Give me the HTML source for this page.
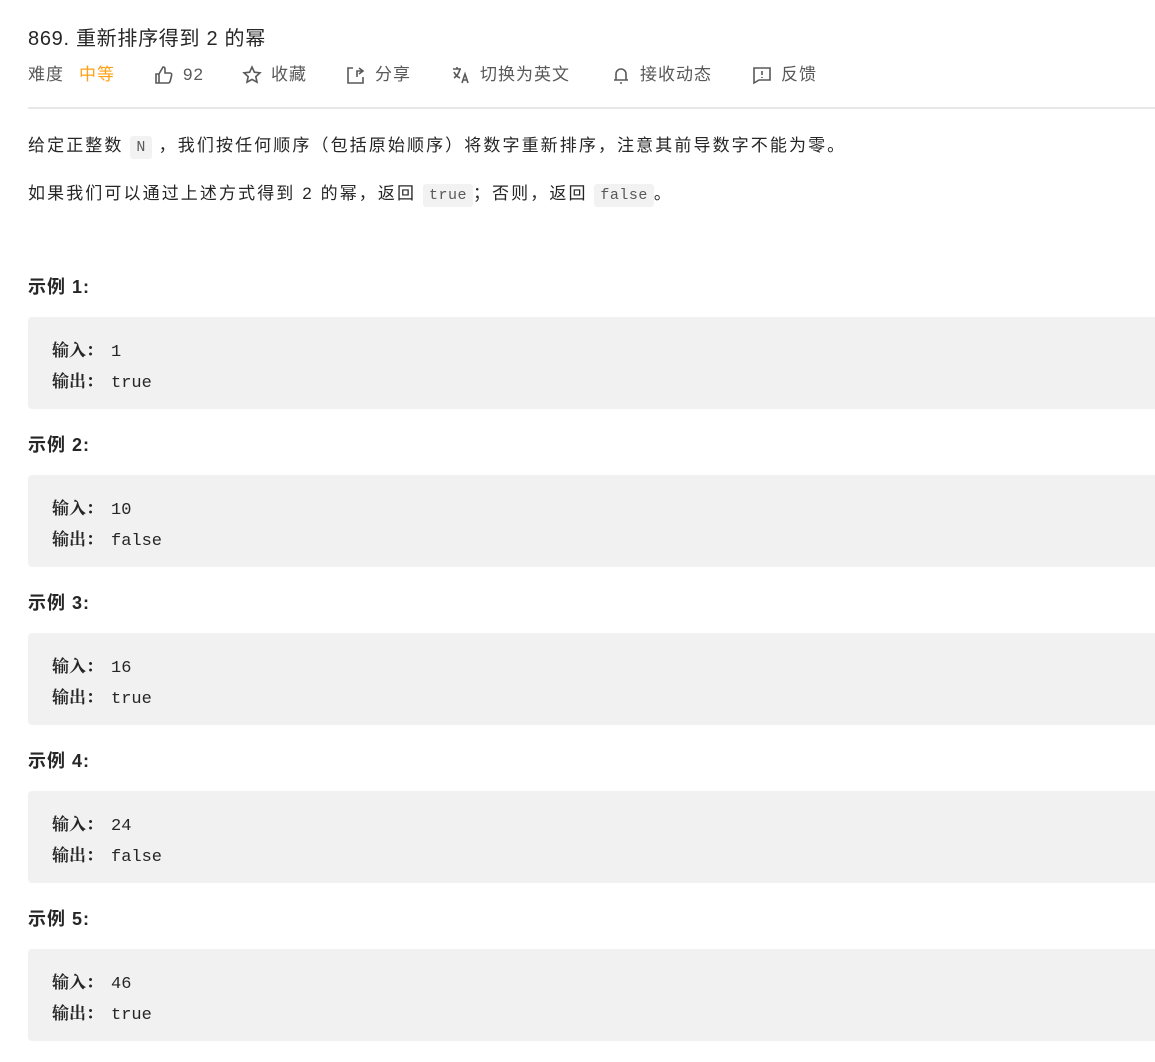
<!DOCTYPE html>
<html><head><meta charset="utf-8"><style>
body{margin:0;background:#fff;width:1155px;height:1062px;overflow:hidden;position:relative;font-family:"Liberation Sans","Noto Sans CJK SC",sans-serif;color:#262626}
.a{position:absolute;white-space:nowrap}
.title{left:28px;top:22px;font-size:20px;color:#262626;letter-spacing:0.7px}
.tb{top:63px;height:24px;line-height:24px;font-size:17px;letter-spacing:1px;color:#595959;display:flex;align-items:center}
.tb svg{margin-right:9px}
.sep{position:absolute;left:28px;top:107px;width:1127px;height:2px;background:#e8e8e8}
.p{left:28px;font-size:17px;letter-spacing:2.1px;color:#262626}
code{font-family:"Liberation Mono",monospace;font-size:15px;letter-spacing:0.5px;background:#f2f2f2;border-radius:3px;padding:3px 6px;color:#595959}
.h{left:28px;font-size:18px;letter-spacing:1px;font-weight:bold;color:#262626}
.pre{position:absolute;left:28px;width:1127px;height:92px;background:#f1f1f1;border-radius:4px 0 0 4px}
.pre div{position:absolute;left:24px;font-family:"Liberation Mono","Noto Sans CJK SC",monospace;font-size:17px;color:#262626;white-space:nowrap}
.pre b{font-family:"Noto Serif CJK SC","Liberation Serif",serif;font-weight:bold;display:inline-block;width:59px}
</style></head><body>
<div class="a title">869. 重新排序得到 2 的幂</div>
<div class="a tb" style="left:28px">难度 <span style="color:#ffa116;margin-left:15px">中等</span></div>
<div class="a tb" style="left:154px"><svg width="20" height="20" viewBox="0 0 20 20" fill="none" stroke="#595959" stroke-width="1.6"><path d="M2 9h3v9H2zM5 9l4-7c1.5 0 2 1 2 2v4h5c1 0 2 1 1.7 2l-1.5 6c-.3 1-1 2-2 2H5"/></svg>92</div>
<div class="a tb" style="left:242px"><svg width="20" height="20" viewBox="0 0 20 20" fill="none" stroke="#595959" stroke-width="1.6"><path d="M10 2l2.4 5.2 5.6.6-4.2 3.8 1.2 5.6L10 14.4 5 17.2l1.2-5.6L2 7.8l5.6-.6z"/></svg>收藏</div>
<div class="a tb" style="left:346px"><svg width="20" height="20" viewBox="0 0 20 20" fill="none" stroke="#595959" stroke-width="1.6"><path d="M7 3H2v15h15v-6M11 12V6h6M13 3l4 3-4 3"/></svg>分享</div>
<div class="a tb" style="left:451px"><svg width="20" height="20" viewBox="0 0 20 20" fill="none" stroke="#595959" stroke-width="1.6"><path d="M2 4h8M6 2v2M3 7c2 4 4 5 6 6M9 4c-1 4-3 7-6 9M11 18l3-9 3 9M12 15h4"/></svg>切换为英文</div>
<div class="a tb" style="left:611px"><svg width="20" height="20" viewBox="0 0 20 20" fill="none" stroke="#595959" stroke-width="1.6"><path d="M5 15V9a5 5 0 0110 0v6M3 15h14M9 18h2"/></svg>接收动态</div>
<div class="a tb" style="left:752px"><svg width="20" height="20" viewBox="0 0 20 20" fill="none" stroke="#595959" stroke-width="1.6"><path d="M2 3h16v12H7l-5 3zM10 6v4M10 12v1"/></svg>反馈</div>
<div class="sep"></div>
<div class="a p" style="top:131px">给定正整数 <code>N</code> ，我们按任何顺序（包括原始顺序）将数字重新排序，注意其前导数字不能为零。</div>
<div class="a p" style="top:179px">如果我们可以通过上述方式得到 2 的幂，返回 <code>true</code>；否则，返回 <code>false</code>。</div>

<div class="a h" style="top:273px">示例 1:</div>
<div class="pre" style="top:317px"><div style="top:19px"><b>输入：</b>1</div><div style="top:50px"><b>输出：</b>true</div></div>
<div class="a h" style="top:431px">示例 2:</div>
<div class="pre" style="top:475px"><div style="top:19px"><b>输入：</b>10</div><div style="top:50px"><b>输出：</b>false</div></div>
<div class="a h" style="top:589px">示例 3:</div>
<div class="pre" style="top:633px"><div style="top:19px"><b>输入：</b>16</div><div style="top:50px"><b>输出：</b>true</div></div>
<div class="a h" style="top:747px">示例 4:</div>
<div class="pre" style="top:791px"><div style="top:19px"><b>输入：</b>24</div><div style="top:50px"><b>输出：</b>false</div></div>
<div class="a h" style="top:905px">示例 5:</div>
<div class="pre" style="top:949px"><div style="top:19px"><b>输入：</b>46</div><div style="top:50px"><b>输出：</b>true</div></div>
</body></html>
